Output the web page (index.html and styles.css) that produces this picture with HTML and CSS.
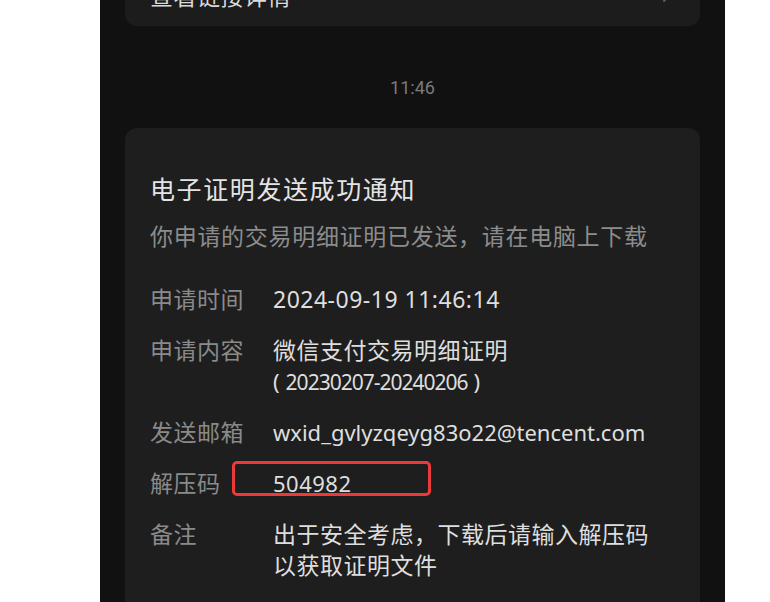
FILE: index.html
```html
<!DOCTYPE html>
<html lang="zh-CN">
<head>
<meta charset="utf-8">
<title>电子证明发送成功通知</title>
<link rel="stylesheet" href="styles.css">
</head>
<body>
<div class="panel">
  <div class="link-card">
    <span class="link-text">查看链接详情</span>
    <svg class="chevron" width="10" height="18" viewBox="0 0 10 18"><path d="M2 2 L8 9 L2 16" fill="none" stroke="#6a6a6a" stroke-width="1.8" stroke-linecap="round" stroke-linejoin="round"/></svg>
  </div>
  <div class="time">11:46</div>
  <div class="card">
    <div class="title">电子证明发送成功通知</div>
    <div class="subtitle">你申请的交易明细证明已发送，请在电脑上下载</div>
    <div class="rows">
      <div class="row"><div class="label">申请时间</div><div class="value">2024-09-19 11:46:14</div></div>
      <div class="row"><div class="label">申请内容</div><div class="value">微信支付交易明细证明<br><span class="range"><span class="paren-l">(</span>20230207-20240206<span class="paren-r">)</span></span></div></div>
      <div class="row"><div class="label">发送邮箱</div><div class="value email">wxid_gvlyzqeyg83o22@tencent.com</div></div>
      <div class="row"><div class="label">解压码</div><div class="value code">504982<span class="mark"></span></div></div>
      <div class="row"><div class="label">备注</div><div class="value">出于安全考虑，下载后请输入解压码<br>以获取证明文件</div></div>
    </div>
  </div>
</div>
</body>
</html>
```

FILE: styles.css
```css
html, body {
  margin: 0;
  padding: 0;
  background: #ffffff;
  height: 100%;
  overflow: hidden;
}
body {
  padding-left: 100px;
  font-family: "Noto Sans", "Noto Sans CJK SC", sans-serif;
}
.panel {
  width: 625px;
  height: 700px;
  background: #111111;
  margin-top: -33px;
  padding: 0 25px;
  box-sizing: border-box;
}
.link-card {
  background: #1c1c1c;
  border-radius: 12px;
  height: 59px;
  box-sizing: border-box;
  padding: 14px 28px 14px 25px;
  display: flex;
  align-items: center;
  justify-content: space-between;
}
.link-text {
  font-size: 23px;
  line-height: 31px;
  color: #dadada;
  letter-spacing: 0.5px;
}
.chevron {
  display: block;
  margin-top: -6px;
}
.time {
  text-align: center;
  margin: 52px 0 30px;
  font-size: 18px;
  line-height: 20px;
  color: #7a7a7a;
  font-family: "Roboto", "Noto Sans", sans-serif;
}
.card {
  background: #1e1e1e;
  border-radius: 12px;
  padding: 45px 25px 60px;
  height: 600px;
  box-sizing: border-box;
}
.title {
  font-size: 25px;
  line-height: 32px;
  letter-spacing: 1.6px;
  color: #e4e4e4;
}
.subtitle {
  margin-top: 16px;
  font-size: 23px;
  line-height: 31px;
  letter-spacing: 0.7px;
  color: #8c8c8c;
}
.rows {
  margin-top: 32px;
  display: flex;
  flex-direction: column;
  gap: 20px;
}
.row {
  display: flex;
  font-size: 23px;
  line-height: 31px;
}
.label {
  width: 123px;
  flex: none;
  color: #8a8a8a;
  letter-spacing: 0.5px;
}
.value {
  color: #dedede;
  letter-spacing: 0.5px;
}
.value.email {
  font-size: 22px;
  letter-spacing: 0;
}
.range {
  font-size: 21px;
  line-height: 1;
  letter-spacing: -1px;
}
.paren-l {
  font-size: 22px;
  margin-right: 7px;
}
.paren-r {
  font-size: 22px;
  margin-left: 6px;
}
.value.code {
  position: relative;
  font-size: 22px;
}
.mark {
  position: absolute;
  left: -41px;
  top: -7px;
  width: 199px;
  height: 35px;
  box-sizing: border-box;
  border: 3px solid #ec3a3a;
  border-radius: 5px;
}
```
